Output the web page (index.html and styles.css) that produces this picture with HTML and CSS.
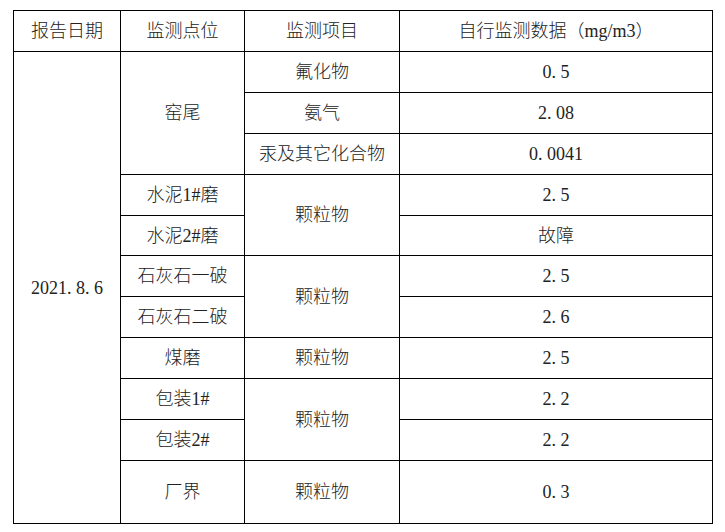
FILE: index.html
```html
<!DOCTYPE html>
<html lang="zh-CN">
<head>
<meta charset="utf-8">
<title>自行监测数据</title>
<link rel="stylesheet" href="styles.css">
</head>
<body>
<table class="report">
  <colgroup>
    <col class="c1"><col class="c2"><col class="c3"><col class="c4">
  </colgroup>
  <thead>
    <tr><th>报告日期</th><th>监测点位</th><th>监测项目</th><th>自行监测数据（mg/m3）</th></tr>
  </thead>
  <tbody>
    <tr><td rowspan="11">2021<span class="dt">.</span>8<span class="dt">.</span>6</td><td rowspan="3">窑尾</td><td>氟化物</td><td>0<span class="dt">.</span>5</td></tr>
    <tr><td>氨气</td><td>2<span class="dt">.</span>08</td></tr>
    <tr><td>汞及其它化合物</td><td>0<span class="dt">.</span>0041</td></tr>
    <tr><td>水泥1#磨</td><td rowspan="2">颗粒物</td><td>2<span class="dt">.</span>5</td></tr>
    <tr class="short"><td>水泥2#磨</td><td>故障</td></tr>
    <tr><td>石灰石一破</td><td rowspan="2">颗粒物</td><td>2<span class="dt">.</span>5</td></tr>
    <tr><td>石灰石二破</td><td>2<span class="dt">.</span>6</td></tr>
    <tr><td>煤磨</td><td>颗粒物</td><td>2<span class="dt">.</span>5</td></tr>
    <tr><td>包装1#</td><td rowspan="2">颗粒物</td><td>2<span class="dt">.</span>2</td></tr>
    <tr><td>包装2#</td><td>2<span class="dt">.</span>2</td></tr>
    <tr class="tall"><td>厂界</td><td>颗粒物</td><td>0<span class="dt">.</span>3</td></tr>
  </tbody>
</table>
</body>
</html>
```

FILE: styles.css
```css
html, body {
  margin: 0;
  padding: 0;
  background: #ffffff;
}

.report {
  margin: 10px 0 0 13px;
  border-collapse: collapse;
  table-layout: fixed;
  width: 699px;
  font-family: "Liberation Serif", "Noto Sans CJK SC", serif;
  font-size: 18px;
  font-weight: 300;
  color: #222222;
}

.report .c1 { width: 107px; }
.report .c2 { width: 124px; }
.report .c3 { width: 155px; }
.report .c4 { width: 313px; }

.report th,
.report td {
  border: 1px solid #000000;
  padding: 0;
  text-align: center;
  vertical-align: middle;
  font-weight: 300;
  line-height: 20px;
}

.report tr {
  height: 41px;
}

.report tr.short {
  height: 40px;
}

.report tr.tall {
  height: 63px;
}

.dt {
  display: inline-block;
  width: 9px;
  text-align: left;
}
```
